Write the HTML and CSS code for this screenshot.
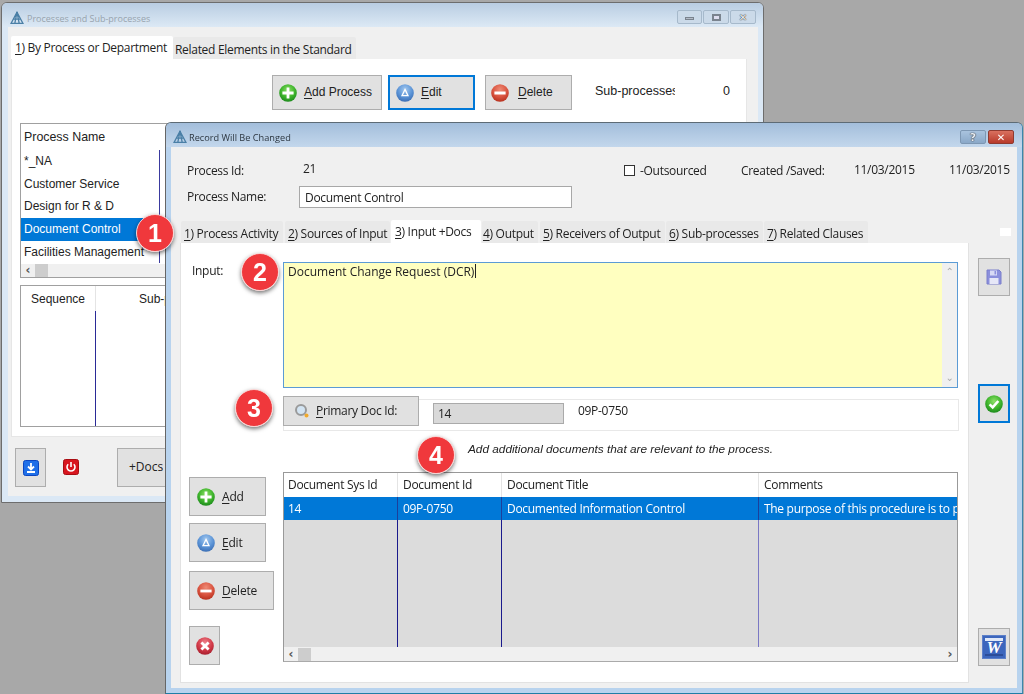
FILE: index.html
```html
<!DOCTYPE html>
<html lang="en">
<head>
<meta charset="utf-8">
<title>Processes and Sub-processes</title>
<link rel="stylesheet" href="styles.css">
</head>
<body>
<svg class="defs" width="0" height="0" aria-hidden="true">
  <defs>
    <radialGradient id="gGreen" cx="50%" cy="35%" r="65%"><stop offset="0" stop-color="#8fe06a"/><stop offset=".6" stop-color="#3fb52c"/><stop offset="1" stop-color="#1d8a1d"/></radialGradient>
    <radialGradient id="gBlue" cx="50%" cy="30%" r="70%"><stop offset="0" stop-color="#a3c8ee"/><stop offset=".6" stop-color="#5a93d6"/><stop offset="1" stop-color="#3c6fb5"/></radialGradient>
    <radialGradient id="gRed" cx="50%" cy="30%" r="70%"><stop offset="0" stop-color="#ee8a75"/><stop offset=".6" stop-color="#d9533f"/><stop offset="1" stop-color="#b8321f"/></radialGradient>
    <radialGradient id="gCrim" cx="50%" cy="30%" r="70%"><stop offset="0" stop-color="#ee7f8a"/><stop offset=".6" stop-color="#d23a48"/><stop offset="1" stop-color="#a81f2e"/></radialGradient>
    <symbol id="iPlus" viewBox="0 0 18 18"><circle cx="9" cy="9" r="8.8" fill="url(#gGreen)"/><path d="M9 3.4v11.2M3.4 9h11.2" stroke="#fff" stroke-width="2.8"/></symbol>
    <symbol id="iEdit" viewBox="0 0 18 18"><circle cx="9" cy="9" r="8.8" fill="url(#gBlue)"/><path d="M9 5.4 L12 11.6 H6Z" fill="none" stroke="#fff" stroke-width="1.3"/></symbol>
    <symbol id="iMinus" viewBox="0 0 18 18"><circle cx="9" cy="9" r="8.8" fill="url(#gRed)"/><path d="M3.4 9h11.2" stroke="#fff" stroke-width="2.8"/></symbol>
    <symbol id="iCross" viewBox="0 0 18 18"><circle cx="9" cy="9" r="8.8" fill="url(#gCrim)"/><path d="M5.4 5.4l7.2 7.2M12.6 5.4l-7.2 7.2" stroke="#fff" stroke-width="2.8"/></symbol>
    <symbol id="iLogo" viewBox="0 0 14 14"><path d="M7 1.2 L13 12.4 H1Z M7 1.2 L4.8 12.4 M7 1.2 L9.2 12.4 M3.4 8.2 H10.6" fill="none" stroke="#4a7fa6" stroke-width="1.3"/></symbol>
  </defs>
</svg>

<section class="win win-back">
  <header class="titlebar titlebar-back">
    <svg class="logo"><use href="#iLogo"/></svg>
    <span class="title title-muted">Processes and Sub-processes</span>
    <div class="ctrls">
      <span class="ctrl ctrl-w25"><i class="glyph-min"></i></span>
      <span class="ctrl ctrl-w26"><i class="glyph-max"></i></span>
      <span class="ctrl ctrl-w26 glyph-x">✕</span>
    </div>
  </header>
  <div class="client client-back">
    <nav class="tabs tabs-back">
      <span class="tab tab-active tab-a1"><u>1</u>) By Process or Department</span>
      <span class="tab tab-a2">Related Elements in the Standard</span>
    </nav>
    <div class="page page-back">
      <div class="toolbar">
        <button class="btn btn-addp"><svg class="ico"><use href="#iPlus"/></svg><span><u>A</u>dd Process</span></button>
        <button class="btn btn-editp btn-focus"><svg class="ico"><use href="#iEdit"/></svg><span><u>E</u>dit</span></button>
        <button class="btn btn-delp"><svg class="ico"><use href="#iMinus"/></svg><span><u>D</u>elete</span></button>
        <span class="subcount-label">Sub-processes</span>
        <span class="subcount-value">0</span>
      </div>
      <div class="listbox">
        <div class="list-head">Process Name</div>
        <div class="list-rows">
          <div class="list-row">*_NA</div>
          <div class="list-row">Customer Service</div>
          <div class="list-row">Design for R &amp; D</div>
          <div class="list-row list-row-sel">Document Control</div>
          <div class="list-row">Facilities Management</div>
        </div>
        <div class="hscroll"><span class="arrow">‹</span><span class="thumb"></span></div>
      </div>
      <div class="seqbox">
        <div class="seq-head"><span class="seq-c1">Sequence</span><span class="seq-c2">Sub-processes</span></div>
        <div class="seq-body"><span class="seq-cell"></span></div>
      </div>
    </div>
    <div class="back-foot">
      <button class="btn btn-square">
        <svg class="ico-16" viewBox="0 0 16 16"><rect x=".5" y=".5" width="15" height="15" rx="2" fill="#1f6fe8" stroke="#0b45c0"/><path d="M8 3v6M5 6.5L8 9.5l3-3M4 12h8" fill="none" stroke="#fff" stroke-width="1.8"/></svg>
      </button>
      <span class="power">
        <svg class="ico-16" viewBox="0 0 16 16"><rect x=".5" y=".5" width="15" height="15" rx="2" fill="#d8161f" stroke="#a80d12"/><path d="M5.2 5.2a4 4 0 1 0 5.6 0M8 3v5" fill="none" stroke="#fff" stroke-width="1.6"/></svg>
      </span>
      <button class="btn btn-docs">+Docs</button>
    </div>
  </div>
</section>

<section class="win win-front">
  <header class="titlebar titlebar-front">
    <svg class="logo"><use href="#iLogo"/></svg>
    <span class="title">Record Will Be Changed</span>
    <div class="ctrls">
      <span class="ctrl ctrl-help">?</span>
      <span class="ctrl ctrl-close">✕</span>
    </div>
  </header>
  <div class="client client-front">
    <div class="row-meta">
      <span class="m-label">Process Id:</span>
      <span class="m-id">21</span>
      <span class="m-check"><i class="checkbox"></i>-Outsourced</span>
      <span class="m-created">Created /Saved:</span>
      <span class="m-date">11/03/2015</span>
      <span class="m-date">11/03/2015</span>
    </div>
    <div class="row-name">
      <span class="n-label">Process Name:</span>
      <div class="n-input">Document Control</div>
    </div>
    <nav class="tabs tabs-front">
      <span class="tab tab-f1"><u>1</u>) Process Activity</span>
      <span class="tab tab-f2"><u>2</u>) Sources of Input</span>
      <span class="tab tab-active tab-f3"><u>3</u>) Input +Docs</span>
      <span class="tab tab-f4"><u>4</u>) Output</span>
      <span class="tab tab-f5"><u>5</u>) Receivers of Output</span>
      <span class="tab tab-f6"><u>6</u>) Sub-processes</span>
      <span class="tab tab-f7"><u>7</u>) Related Clauses</span>
      <i class="tab-chip"></i>
    </nav>
    <div class="work">
      <div class="page page-front">
        <div class="row-input">
          <label class="i-label">Input:</label>
          <div class="textarea">
            <div class="textarea-text">Document Change Request (DCR)<i class="caret"></i></div>
            <div class="vscroll"><span>⌃</span><span>⌄</span></div>
          </div>
        </div>
        <div class="doc-panel">
          <button class="btn btn-primary">
            <svg class="ico-16" viewBox="0 0 16 16"><circle cx="7" cy="7" r="5" fill="#d3e4f2" stroke="#9a9a9a" stroke-width="2"/><circle cx="12.5" cy="12.5" r="2" fill="#f0a92c"/></svg>
            <span><u>P</u>rimary Doc Id:</span>
          </button>
          <div class="doc-field">14</div>
          <span class="doc-num">09P-0750</span>
        </div>
        <p class="hint">Add additional documents that are relevant to the process.</p>
        <div class="lower">
          <div class="side-btns">
            <button class="btn btn-add"><svg class="ico"><use href="#iPlus"/></svg><span><u>A</u>dd</span></button>
            <button class="btn btn-edit"><svg class="ico"><use href="#iEdit"/></svg><span><u>E</u>dit</span></button>
            <button class="btn btn-del"><svg class="ico"><use href="#iMinus"/></svg><span><u>D</u>elete</span></button>
            <button class="btn btn-cancel"><svg class="ico"><use href="#iCross"/></svg></button>
          </div>
          <div class="grid">
            <div class="g-cols g-head"><span>Document Sys Id</span><span>Document Id</span><span>Document Title</span><span>Comments</span></div>
            <div class="g-cols g-sel"><span>14</span><span>09P-0750</span><span>Documented Information Control</span><span>The purpose of this procedure is to provide</span></div>
            <div class="g-cols g-fill"><span></span><span></span><span></span><span></span></div>
            <div class="hscroll hscroll-grid"><span class="arrow">‹</span><span class="thumb"></span><span class="arrow arrow-end">›</span></div>
          </div>
        </div>
      </div>
      <aside class="side-right">
        <button class="btn btn-tool btn-save">
          <svg class="ico-18" viewBox="0 0 18 18"><path d="M2 2h12l2 2v12H2z" fill="#8b8fdc" stroke="#7a7ecb"/><rect x="5" y="2.5" width="7" height="5" fill="#d8daf5"/><rect x="9.5" y="3" width="1.6" height="3.4" fill="#8b8fdc"/><rect x="4.5" y="10" width="9" height="6" fill="#e6e7f7"/></svg>
        </button>
        <button class="btn btn-tool btn-ok btn-focus">
          <svg class="ico-18" viewBox="0 0 18 18"><circle cx="9" cy="9" r="8.8" fill="url(#gGreen)"/><path d="M4.6 9.4l3.1 3 5.6-6.4" fill="none" stroke="#fff" stroke-width="2.6"/></svg>
        </button>
        <button class="btn btn-tool btn-word">
          <svg class="ico-24" viewBox="0 0 24 24"><rect x=".5" y=".5" width="23" height="23" fill="#3c66bd" stroke="#5d80c9"/><rect x="3" y="3" width="18" height="3" fill="#dfe8f8"/><rect x="3" y="19" width="18" height="2" fill="#2c4d98"/><text x="12" y="18" class="word-w">W</text></svg>
        </button>
      </aside>
    </div>
  </div>
</section>

<span class="badge badge-1">1</span>
<span class="badge badge-2">2</span>
<span class="badge badge-3">3</span>
<span class="badge badge-4">4</span>
</body>
</html>
```
FILE: styles.css
```css
* { box-sizing: border-box; }
html, body { margin: 0; height: 100%; }
html { background: #a8a8a8; }
body {
  position: relative;
  width: 1024px;
  height: 694px;
  overflow: hidden;
  font: 12px/1.2 "Open Sans", "Liberation Sans", sans-serif;
  letter-spacing: -.3px;
  color: #222;
  filter: blur(.3px);
}
.defs { position: absolute; }
u { text-decoration: underline; text-underline-offset: 2px; }
button { font: inherit; color: inherit; padding: 0; margin: 0; letter-spacing: inherit; }

/* windows on the desktop */
.win {
  position: absolute;
  display: flex;
  flex-direction: column;
  border: 1px solid #6d6d6d;
  border-radius: 6px 6px 0 0;
  overflow: hidden;
}
.win-back { left: 1px; top: 2px; width: 763px; height: 501px; background: #dbe8f5; }
.win-front {
  left: 165px; top: 122px; width: 858px; height: 572px;
  background: #b8d3ee;
  border-color: #5d6b75 #3c86ad #1f7ea6 #666;
}

.titlebar { display: flex; align-items: center; flex: none; padding-left: 9px; }
.titlebar-back { height: 24px; padding-top: 6px; padding-left: 8px; background: linear-gradient(#b9cde2, #dce9f5); }
.titlebar-front { height: 24px; padding-top: 4px; padding-left: 7px; background: linear-gradient(#a3bedb, #c3d7ec); }
.logo { width: 14px; height: 14px; flex: none; }
.title { margin-left: 2px; font: 9.2px "Open Sans", sans-serif; letter-spacing: 0; color: #2c3640; }
.title-muted { color: #98a4ae; margin-left: 3px; font-size: 9px; }
.ctrls { margin-left: auto; display: flex; gap: 1px; align-self: flex-start; }
.titlebar-back .ctrls { margin-top: 1px; margin-right: 7px; }
.titlebar-front .ctrls { margin-top: 3px; margin-right: 8px; gap: 2px; }
.ctrl {
  display: flex; align-items: center; justify-content: center;
  height: 14px;
  border: 1px solid #a6b9cb;
  border-radius: 2px;
  background: #cbdae9;
  letter-spacing: 0;
}
.ctrl-w25 { width: 25px; }
.ctrl-w26 { width: 26px; }
.glyph-min { width: 9px; height: 3px; margin-top: 3px; background: #b4bcc8; border: 1px solid #7a838e; }
.glyph-max { width: 9px; height: 7px; border: 2px solid #7a838e; background: #dde; }
.glyph-x { font: bold 10px "DejaVu Sans", sans-serif; color: #f4f6f9; text-shadow: 0 0 1px #222, 0 0 1px #222; }
.ctrl-help { width: 26px; background: linear-gradient(#a9c3de, #8aa8c8); border-color: #7d97b3; font: bold 11px "DejaVu Sans", sans-serif; color: #e8eef5; text-shadow: 0 0 1px #222, 0 0 1px #222; }
.ctrl-close { width: 26px; background: linear-gradient(#d9705f, #b83a2b); border-color: #8f3a30; font: bold 10px "DejaVu Sans", sans-serif; color: #fff; }

.client { flex: none; background: #f0f0f0; }
.client-back { margin: 0 5px 0 6px; height: 469px; padding: 9px 0 0 3px; }
.client-front { margin: 0 5px 0 5px; height: 541px; padding-top: 14px; }

/* tabs */
.tabs { display: flex; align-items: flex-end; }
.tab {
  display: flex; align-items: center;
  height: 22px;
  padding-left: 3px;
  padding-top: 4px;
  white-space: nowrap;
  background: #e9e9e9;
  border-radius: 2px 2px 0 0;
}
.tab-active { height: 23px; background: #fff; padding-top: 2px; padding-bottom: 0; }
.tabs-back { height: 23px; }
.tab-a1 { width: 162px; padding-left: 4px; }
.tab-a2 { width: 183px; padding-left: 2px; }
.tabs-front { height: 23px; margin-top: 12px; padding-left: 10px; position: relative; }
.tab-f1 { width: 102px; margin-right: 2px; }
.tab-f2 { width: 105px; margin-right: 1px; }
.tab-f3 { width: 90px; margin-right: 1px; padding-left: 4px; }
.tab-f4 { width: 56px; margin-right: 2px; padding-left: 1px; }
.tab-f5 { width: 125px; margin-right: 1px; }
.tab-f6 { width: 97px; margin-right: 1px; }
.tab-f7 { width: 104px; }
.tab-chip { width: 11px; height: 8px; background: #fff; margin: 0 6px 7px auto; align-self: flex-end; }

/* buttons */
.btn {
  display: flex; align-items: center;
  background: #e1e1e1;
  border: 1px solid #adadad;
  font-family: "Liberation Sans", sans-serif;
  font-size: 12px;
  letter-spacing: 0;
  text-align: left;
}
.btn-focus { border: 2px solid #0078d7; }
.ico { width: 18px; height: 18px; flex: none; }
.ico-16 { width: 16px; height: 16px; flex: none; }
.ico-18 { width: 18px; height: 18px; flex: none; }
.ico-24 { width: 24px; height: 24px; flex: none; }

/* back window */
.page { background: #fff; }
.page-back { width: 736px; height: 378px; padding: 16px 0 0 8px; border: 1px solid #e6e6e6; border-top: 0; }
.toolbar { display: flex; align-items: flex-start; height: 35px; margin-left: 252px; font-family: "Liberation Sans", sans-serif; font-size: 12.5px; letter-spacing: 0; }
.btn-addp { width: 110px; height: 35px; padding-left: 6px; margin-right: 6px; gap: 7px; }
.btn-editp { width: 87px; height: 35px; padding-left: 6px; margin-right: 10px; gap: 7px; }
.btn-delp { width: 87px; height: 35px; padding-left: 5px; gap: 9px; }
.subcount-label { width: 80px; margin-left: 23px; margin-top: 9px; overflow: hidden; white-space: nowrap; }
.subcount-value { margin-left: 48px; margin-top: 9px; }

.listbox {
  width: 300px; height: 155px; margin-top: 13px;
  border: 1px solid #a0a0a0;
  display: flex; flex-direction: column;
  font-family: "Liberation Sans", sans-serif; font-size: 12px; letter-spacing: 0;
}
.list-head { height: 26px; padding: 6px 0 0 3px; font-size: 12.4px; }
.list-rows { height: 114px; }
.list-row { height: 22.7px; line-height: 22.7px; padding-left: 3px; background: linear-gradient(#3a3a9e, #3a3a9e) 138px 0 / 1px 100% no-repeat; }
.list-row-sel { background: #0078d7; color: #fff; }
.hscroll { display: flex; align-items: center; height: 13px; background: #f0f0f0; flex: none; }
.arrow { width: 14px; text-align: center; font: bold 12px/13px "DejaVu Sans", sans-serif; letter-spacing: 0; color: #555; }
.thumb { width: 13px; height: 13px; background: #cdcdcd; }
.arrow-end { margin-left: auto; }

.seqbox { width: 300px; height: 142px; margin-top: 7px; border: 1px solid #a0a0a0; display: flex; flex-direction: column; font-family: "Liberation Sans", sans-serif; font-size: 12px; letter-spacing: 0; }
.seq-head { display: flex; height: 25px; flex: none; }
.seq-c1 { width: 75px; padding: 6px 0 0 10px; border-right: 1px solid #e4e4e4; }
.seq-c2 { padding: 6px 0 0 43px; white-space: nowrap; }
.seq-body { flex: 1; display: flex; }
.seq-cell { width: 75px; border-right: 1px solid #2a2a96; }

.back-foot { display: flex; align-items: flex-start; margin-top: 11px; padding-left: 4px; }
.btn-square { width: 31px; height: 39px; justify-content: center; }
.power { margin: 11px 0 0 17px; display: flex; }
.btn-docs { width: 100px; height: 39px; margin-left: 38px; padding-left: 11px; font-family: "Open Sans", sans-serif; font-size: 12px; }

/* front window */
.row-meta { display: flex; height: 20px; padding-left: 16px; align-items: center; }
.row-meta > span { flex: none; }
.m-label { width: 116px; margin-top: 1px; }
.m-id { width: 321px; margin-top: -3px; }
.m-check { width: 117px; display: flex; align-items: center; gap: 5px; }
.checkbox { width: 11px; height: 11px; border: 1px solid #333; background: #fff; }
.m-created { width: 113px; }
.m-date { width: 95px; margin-top: -2px; }
.row-name { display: flex; align-items: center; height: 22px; margin-top: 5px; padding-left: 16px; }
.n-label { width: 112px; }
.n-input { width: 273px; height: 22px; padding: 4px 5px 0; background: #fff; border: 1px solid #a8a8a8; }

.work { display: flex; align-items: flex-start; margin-left: 9px; }
.page-front { width: 789px; height: 440px; border: 1px solid #e2e2e2; border-top: 0; padding-top: 19px; }
.row-input { display: flex; padding-left: 11px; }
.i-label { width: 91px; padding-top: 2px; }
.textarea { width: 675px; height: 126px; display: flex; border: 1px solid #5b9bd5; background: #ffffc0; }
.textarea-text { flex: 1; padding: 1px 4px; letter-spacing: 0; }
.caret { display: inline-block; width: 1px; height: 14px; margin-left: 1px; background: #222; vertical-align: -2px; }
.vscroll { width: 15px; flex: none; background: #f0f0f0; display: flex; flex-direction: column; justify-content: space-between; text-align: center; color: #aaa; font: 10px/10px "DejaVu Sans", sans-serif; padding: 4px 0; }

.doc-panel {
  display: flex; align-items: flex-start;
  width: 676px; height: 32px;
  margin: 11px 0 0 102px;
  border: 1px solid #e8e8e8;
}
.btn-primary {
  width: 136px; height: 30px;
  margin: -4px 0 0 -1px;
  padding-left: 10px; gap: 6px;
  font-family: "Open Sans", sans-serif; font-size: 12px; letter-spacing: -.3px;
  background: #e1e1e1;
}
.doc-field { width: 131px; height: 21px; margin: 3px 0 0 14px; padding: 3px 4px; background: #d9d9d9; border: 1px solid #aaa; }
.doc-num { margin: 4px 0 0 14px; }
.hint { margin: 9px 0 0 287px; height: 18px; font: italic 11.8px/18px "Liberation Sans", sans-serif; letter-spacing: 0; white-space: nowrap; }

.lower { display: flex; align-items: flex-start; margin: 14px 0 0 8px; }
.side-btns { width: 94px; flex: none; padding-top: 5px; display: flex; flex-direction: column; align-items: flex-start; }
.side-btns .btn { height: 39px; padding-left: 7px; font-family: "Open Sans", sans-serif; font-size: 12px; letter-spacing: -.2px; gap: 7px; }
.side-btns .btn span { padding-top: 2px; }
.btn-add { width: 77px; }
.btn-edit { width: 77px; margin-top: 7px; }
.btn-del { width: 85px; margin-top: 9px; }
.side-btns .btn-cancel { width: 31px; margin-top: 16px; padding-left: 6px; }

.grid { width: 675px; height: 190px; display: flex; flex-direction: column; border: 1px solid #999; border-bottom-color: #aaa; background: #dcdcdc; }
.g-cols { display: grid; grid-template-columns: 114px 104px 257px 1fr; }
.g-cols span { padding-left: 5px; white-space: nowrap; overflow: hidden; line-height: 23px; }
.g-cols span:first-child { padding-left: 4px; }
.g-head { height: 24px; background: #fff; }
.g-head span { border-right: 1px solid #e4e4e4; }
.g-head span:last-child, .g-sel span:last-child, .g-fill span:last-child { border-right: 0; }
.g-sel { height: 23px; background: #0078d7; color: #fff; }
.g-sel span { border-right: 1px solid #1c3f9c; line-height: 24px; }
.g-fill { flex: 1; }
.g-fill span { border-right: 1px solid #1a1a8c; }
.g-fill span:nth-child(3) { border-right: 1px solid #7a78c4; }
.hscroll-grid { height: 14px; }

.side-right { display: flex; flex-direction: column; margin: 15px 0 0 9px; }
.btn-tool { width: 32px; height: 38px; justify-content: center; }
.btn-ok { height: 39px; margin-top: 88px; }
.btn-word { margin-top: 205px; }
.word-w { font: italic bold 17px "Liberation Serif", serif; fill: #fff; text-anchor: middle; }

/* numbered callouts on top of the windows */
.badge {
  position: absolute;
  width: 38px; height: 38px;
  display: flex; align-items: center; justify-content: center;
  border-radius: 50%;
  background: radial-gradient(circle at 50% 45%, #f0383c 0 68%, #d92a2e 100%);
  border: 1px solid #f7d0cf;
  box-shadow: 0 2px 4px rgba(0, 0, 0, .55);
  color: #fff;
  letter-spacing: 0;
  font: bold 25px/1 "Liberation Sans", sans-serif;
}
.badge-1 { left: 136px; top: 214px; }
.badge-2 { left: 241px; top: 253px; }
.badge-3 { left: 235px; top: 389px; }
.badge-4 { left: 417px; top: 436px; }
```
